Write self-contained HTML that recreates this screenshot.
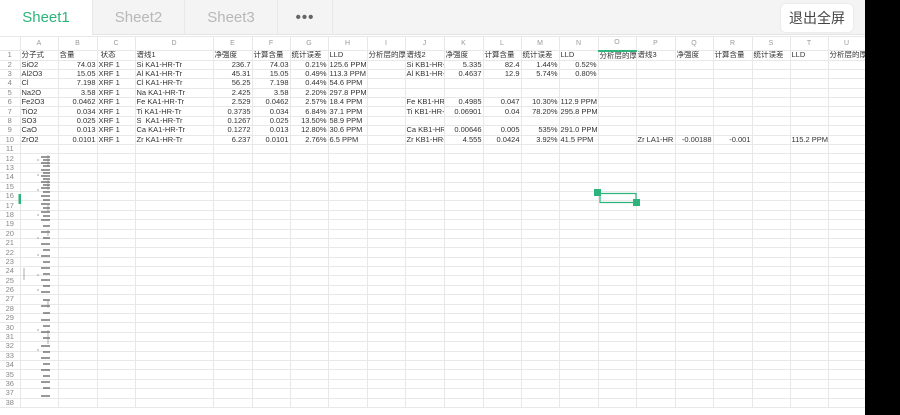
<!DOCTYPE html>
<html><head><meta charset="utf-8"><style>
*{margin:0;padding:0;box-sizing:border-box}
body{width:900px;height:415px;overflow:hidden;background:#fff;font-family:"Liberation Sans","Noto Sans CJK SC",sans-serif;position:relative}
#bar{position:absolute;left:0;top:0;width:865px;height:35px;background:#f4f4f4;border-bottom:1px solid #e4e4e4}
.tab{position:absolute;top:0;height:35px;line-height:35px;text-align:center;font-size:15px;color:#b8b8b8;border-right:1px solid #e8e8e8}
#black{position:absolute;left:865px;top:0;width:35px;height:415px;background:#000}
#btn{position:absolute;left:781px;top:4px;width:72px;height:28px;background:#fff;border-radius:5px;font-size:14px;line-height:28px;text-align:center;color:#444;font-family:"Noto Sans CJK SC",sans-serif;box-shadow:0 0 2px #ddd}
table{position:absolute;left:0;top:36px;border-collapse:collapse;table-layout:fixed;width:865px}
td{border:1px solid #e8e8e8;height:9.4px;font-size:7.5px;line-height:8px;color:#333;white-space:nowrap;overflow:hidden;padding:0 1px;font-family:"Liberation Sans","Noto Sans CJK SC",sans-serif}
tr.h td{height:14px;text-align:center;color:#999;font-size:7px;background:#fff}
td:first-child{text-align:center;color:#888;border-left:none}
.r{text-align:right}
</style></head><body>
<div id="bar">
<div class="tab" style="left:0;width:93px;background:#fff;color:#2db37c">Sheet1</div>
<div class="tab" style="left:93px;width:92px">Sheet2</div>
<div class="tab" style="left:185px;width:93px">Sheet3</div>
<div class="tab" style="left:278px;width:55px;color:#666;font-weight:bold;letter-spacing:1px">•••</div>
</div>
<div id="btn">退出全屏</div>
<table>
<colgroup><col style="width:20px"><col style="width:38px"><col style="width:39px"><col style="width:38px"><col style="width:78px"><col style="width:39px"><col style="width:38px"><col style="width:38px"><col style="width:39px"><col style="width:38px"><col style="width:39px"><col style="width:39px"><col style="width:38px"><col style="width:38px"><col style="width:39px"><col style="width:38px"><col style="width:39px"><col style="width:38px"><col style="width:39px"><col style="width:38px"><col style="width:38px"><col style="width:37px"></colgroup>
<tr class="h"><td></td><td>A</td><td>B</td><td>C</td><td>D</td><td>E</td><td>F</td><td>G</td><td>H</td><td>I</td><td>J</td><td>K</td><td>L</td><td>M</td><td>N</td><td style="border-bottom:2px solid #2db37c">O</td><td>P</td><td>Q</td><td>R</td><td>S</td><td>T</td><td>U</td></tr>
<tr><td>1</td><td>分子式</td><td>含量</td><td>&nbsp;状态</td><td>谱线1</td><td>净强度</td><td>计算含量</td><td>统计误差</td><td>LLD</td><td>分析层的厚</td><td>谱线2</td><td>净强度</td><td>计算含量</td><td>统计误差</td><td>LLD</td><td>分析层的厚</td><td>谱线3</td><td>净强度</td><td>计算含量</td><td>统计误差</td><td>LLD</td><td>分析层的厚</td></tr>
<tr><td>2</td><td>SiO2</td><td class="r">74.03</td><td>XRF 1</td><td>Si KA1-HR-Tr</td><td class="r">236.7</td><td class="r">74.03</td><td class="r">0.21%</td><td>125.6 PPM</td><td></td><td>Si KB1-HR-Tr</td><td class="r">5.335</td><td class="r">82.4</td><td class="r">1.44%</td><td class="r">0.52%</td><td></td><td></td><td></td><td></td><td></td><td></td><td></td></tr>
<tr><td>3</td><td>Al2O3</td><td class="r">15.05</td><td>XRF 1</td><td>Al KA1-HR-Tr</td><td class="r">45.31</td><td class="r">15.05</td><td class="r">0.49%</td><td>113.3 PPM</td><td></td><td>Al KB1-HR-Tr</td><td class="r">0.4637</td><td class="r">12.9</td><td class="r">5.74%</td><td class="r">0.80%</td><td></td><td></td><td></td><td></td><td></td><td></td><td></td></tr>
<tr><td>4</td><td>Cl</td><td class="r">7.198</td><td>XRF 1</td><td>Cl KA1-HR-Tr</td><td class="r">56.25</td><td class="r">7.198</td><td class="r">0.44%</td><td>54.6 PPM</td><td></td><td></td><td></td><td></td><td></td><td></td><td></td><td></td><td></td><td></td><td></td><td></td><td></td></tr>
<tr><td>5</td><td>Na2O</td><td class="r">3.58</td><td>XRF 1</td><td>Na KA1-HR-Tr</td><td class="r">2.425</td><td class="r">3.58</td><td class="r">2.20%</td><td>297.8 PPM</td><td></td><td></td><td></td><td></td><td></td><td></td><td></td><td></td><td></td><td></td><td></td><td></td><td></td></tr>
<tr><td>6</td><td>Fe2O3</td><td class="r">0.0462</td><td>XRF 1</td><td>Fe KA1-HR-Tr</td><td class="r">2.529</td><td class="r">0.0462</td><td class="r">2.57%</td><td>18.4 PPM</td><td></td><td>Fe KB1-HR-Tr</td><td class="r">0.4985</td><td class="r">0.047</td><td class="r">10.30%</td><td>112.9 PPM</td><td></td><td></td><td></td><td></td><td></td><td></td><td></td></tr>
<tr><td>7</td><td>TiO2</td><td class="r">0.034</td><td>XRF 1</td><td>Ti KA1-HR-Tr</td><td class="r">0.3735</td><td class="r">0.034</td><td class="r">6.84%</td><td>37.1 PPM</td><td></td><td>Ti KB1-HR-Tr</td><td class="r">0.06901</td><td class="r">0.04</td><td class="r">78.20%</td><td>295.8 PPM</td><td></td><td></td><td></td><td></td><td></td><td></td><td></td></tr>
<tr><td>8</td><td>SO3</td><td class="r">0.025</td><td>XRF 1</td><td>S&nbsp; KA1-HR-Tr</td><td class="r">0.1267</td><td class="r">0.025</td><td class="r">13.50%</td><td>58.9 PPM</td><td></td><td></td><td></td><td></td><td></td><td></td><td></td><td></td><td></td><td></td><td></td><td></td><td></td></tr>
<tr><td>9</td><td>CaO</td><td class="r">0.013</td><td>XRF 1</td><td>Ca KA1-HR-Tr</td><td class="r">0.1272</td><td class="r">0.013</td><td class="r">12.80%</td><td>30.6 PPM</td><td></td><td>Ca KB1-HR-Tr</td><td class="r">0.00646</td><td class="r">0.005</td><td class="r">535%</td><td>291.0 PPM</td><td></td><td></td><td></td><td></td><td></td><td></td><td></td></tr>
<tr><td>10</td><td>ZrO2</td><td class="r">0.0101</td><td>XRF 1</td><td>Zr KA1-HR-Tr</td><td class="r">6.237</td><td class="r">0.0101</td><td class="r">2.76%</td><td>6.5 PPM</td><td></td><td>Zr KB1-HR-Tr</td><td class="r">4.555</td><td class="r">0.0424</td><td class="r">3.92%</td><td>41.5 PPM</td><td></td><td>Zr LA1-HR</td><td class="r">-0.00188</td><td class="r">-0.001</td><td></td><td>115.2 PPM</td><td></td></tr>
<tr><td>11</td><td></td><td></td><td></td><td></td><td></td><td></td><td></td><td></td><td></td><td></td><td></td><td></td><td></td><td></td><td></td><td></td><td></td><td></td><td></td><td></td><td></td></tr>
<tr><td>12</td><td></td><td></td><td></td><td></td><td></td><td></td><td></td><td></td><td></td><td></td><td></td><td></td><td></td><td></td><td></td><td></td><td></td><td></td><td></td><td></td><td></td></tr>
<tr><td>13</td><td></td><td></td><td></td><td></td><td></td><td></td><td></td><td></td><td></td><td></td><td></td><td></td><td></td><td></td><td></td><td></td><td></td><td></td><td></td><td></td><td></td></tr>
<tr><td>14</td><td></td><td></td><td></td><td></td><td></td><td></td><td></td><td></td><td></td><td></td><td></td><td></td><td></td><td></td><td></td><td></td><td></td><td></td><td></td><td></td><td></td></tr>
<tr><td>15</td><td></td><td></td><td></td><td></td><td></td><td></td><td></td><td></td><td></td><td></td><td></td><td></td><td></td><td></td><td></td><td></td><td></td><td></td><td></td><td></td><td></td></tr>
<tr><td>16</td><td></td><td></td><td></td><td></td><td></td><td></td><td></td><td></td><td></td><td></td><td></td><td></td><td></td><td></td><td></td><td></td><td></td><td></td><td></td><td></td><td></td></tr>
<tr><td>17</td><td></td><td></td><td></td><td></td><td></td><td></td><td></td><td></td><td></td><td></td><td></td><td></td><td></td><td></td><td></td><td></td><td></td><td></td><td></td><td></td><td></td></tr>
<tr><td>18</td><td></td><td></td><td></td><td></td><td></td><td></td><td></td><td></td><td></td><td></td><td></td><td></td><td></td><td></td><td></td><td></td><td></td><td></td><td></td><td></td><td></td></tr>
<tr><td>19</td><td></td><td></td><td></td><td></td><td></td><td></td><td></td><td></td><td></td><td></td><td></td><td></td><td></td><td></td><td></td><td></td><td></td><td></td><td></td><td></td><td></td></tr>
<tr><td>20</td><td></td><td></td><td></td><td></td><td></td><td></td><td></td><td></td><td></td><td></td><td></td><td></td><td></td><td></td><td></td><td></td><td></td><td></td><td></td><td></td><td></td></tr>
<tr><td>21</td><td></td><td></td><td></td><td></td><td></td><td></td><td></td><td></td><td></td><td></td><td></td><td></td><td></td><td></td><td></td><td></td><td></td><td></td><td></td><td></td><td></td></tr>
<tr><td>22</td><td></td><td></td><td></td><td></td><td></td><td></td><td></td><td></td><td></td><td></td><td></td><td></td><td></td><td></td><td></td><td></td><td></td><td></td><td></td><td></td><td></td></tr>
<tr><td>23</td><td></td><td></td><td></td><td></td><td></td><td></td><td></td><td></td><td></td><td></td><td></td><td></td><td></td><td></td><td></td><td></td><td></td><td></td><td></td><td></td><td></td></tr>
<tr><td>24</td><td></td><td></td><td></td><td></td><td></td><td></td><td></td><td></td><td></td><td></td><td></td><td></td><td></td><td></td><td></td><td></td><td></td><td></td><td></td><td></td><td></td></tr>
<tr><td>25</td><td></td><td></td><td></td><td></td><td></td><td></td><td></td><td></td><td></td><td></td><td></td><td></td><td></td><td></td><td></td><td></td><td></td><td></td><td></td><td></td><td></td></tr>
<tr><td>26</td><td></td><td></td><td></td><td></td><td></td><td></td><td></td><td></td><td></td><td></td><td></td><td></td><td></td><td></td><td></td><td></td><td></td><td></td><td></td><td></td><td></td></tr>
<tr><td>27</td><td></td><td></td><td></td><td></td><td></td><td></td><td></td><td></td><td></td><td></td><td></td><td></td><td></td><td></td><td></td><td></td><td></td><td></td><td></td><td></td><td></td></tr>
<tr><td>28</td><td></td><td></td><td></td><td></td><td></td><td></td><td></td><td></td><td></td><td></td><td></td><td></td><td></td><td></td><td></td><td></td><td></td><td></td><td></td><td></td><td></td></tr>
<tr><td>29</td><td></td><td></td><td></td><td></td><td></td><td></td><td></td><td></td><td></td><td></td><td></td><td></td><td></td><td></td><td></td><td></td><td></td><td></td><td></td><td></td><td></td></tr>
<tr><td>30</td><td></td><td></td><td></td><td></td><td></td><td></td><td></td><td></td><td></td><td></td><td></td><td></td><td></td><td></td><td></td><td></td><td></td><td></td><td></td><td></td><td></td></tr>
<tr><td>31</td><td></td><td></td><td></td><td></td><td></td><td></td><td></td><td></td><td></td><td></td><td></td><td></td><td></td><td></td><td></td><td></td><td></td><td></td><td></td><td></td><td></td></tr>
<tr><td>32</td><td></td><td></td><td></td><td></td><td></td><td></td><td></td><td></td><td></td><td></td><td></td><td></td><td></td><td></td><td></td><td></td><td></td><td></td><td></td><td></td><td></td></tr>
<tr><td>33</td><td></td><td></td><td></td><td></td><td></td><td></td><td></td><td></td><td></td><td></td><td></td><td></td><td></td><td></td><td></td><td></td><td></td><td></td><td></td><td></td><td></td></tr>
<tr><td>34</td><td></td><td></td><td></td><td></td><td></td><td></td><td></td><td></td><td></td><td></td><td></td><td></td><td></td><td></td><td></td><td></td><td></td><td></td><td></td><td></td><td></td></tr>
<tr><td>35</td><td></td><td></td><td></td><td></td><td></td><td></td><td></td><td></td><td></td><td></td><td></td><td></td><td></td><td></td><td></td><td></td><td></td><td></td><td></td><td></td><td></td></tr>
<tr><td>36</td><td></td><td></td><td></td><td></td><td></td><td></td><td></td><td></td><td></td><td></td><td></td><td></td><td></td><td></td><td></td><td></td><td></td><td></td><td></td><td></td><td></td></tr>
<tr><td>37</td><td></td><td></td><td></td><td></td><td></td><td></td><td></td><td></td><td></td><td></td><td></td><td></td><td></td><td></td><td></td><td></td><td></td><td></td><td></td><td></td><td></td></tr>
<tr><td>38</td><td></td><td></td><td></td><td></td><td></td><td></td><td></td><td></td><td></td><td></td><td></td><td></td><td></td><td></td><td></td><td></td><td></td><td></td><td></td><td></td><td></td></tr>
</table>
<svg style="position:absolute;left:0;top:0" width="865" height="415">
<g stroke="#333" stroke-width="0.9">
<path d="M41 157h9M43 160h7M41 163h9M43 166h7M41 170h9M43 173h7M41 176h9M43 179h7M41 182h9M43 185h7M41 188h9M43 192h7M41 196h9M43 200h7M41 204h9M43 208h7M41 212h9M43 216h7M41 220h9M43 226h7M41 232h9M43 238h7M41 244h9M43 250h7M41 256h9M43 262h7M41 268h9M43 274h7M41 280h9M43 286h7M41 292h9M43 300h7M41 306h9M43 313h7M41 320h9M43 326h7M41 332h9M43 338h7M41 346h9M43 352h7M41 358h9M43 364h7M41 370h9M43 376h7M41 382h9M43 388h7M41 396h9"/>
</g>
<g stroke="#888" stroke-width="0.7"><path d="M48 155v12M48 180v10M48 205v8M48 230v6M48 300v8M48 330v14M37 160h2M37 175h2M37 190h2M37 215h2M37 238h2M37 255h2M37 275h2M37 290h2M37 330h2M37 350h2M24 268v12"/></g>
<rect x="18.5" y="194" width="2.5" height="10" fill="#2db37c"/>
<g stroke="#2db37c" stroke-width="1.2" fill="none"><path d="M601 193.5h35v9M600 196v6.5h33"/></g>
<rect x="594" y="189" width="7" height="7" fill="#2db37c"/>
<rect x="633" y="199" width="7" height="7" fill="#2db37c"/>
</svg>
<div id="black"></div>
</body></html>
